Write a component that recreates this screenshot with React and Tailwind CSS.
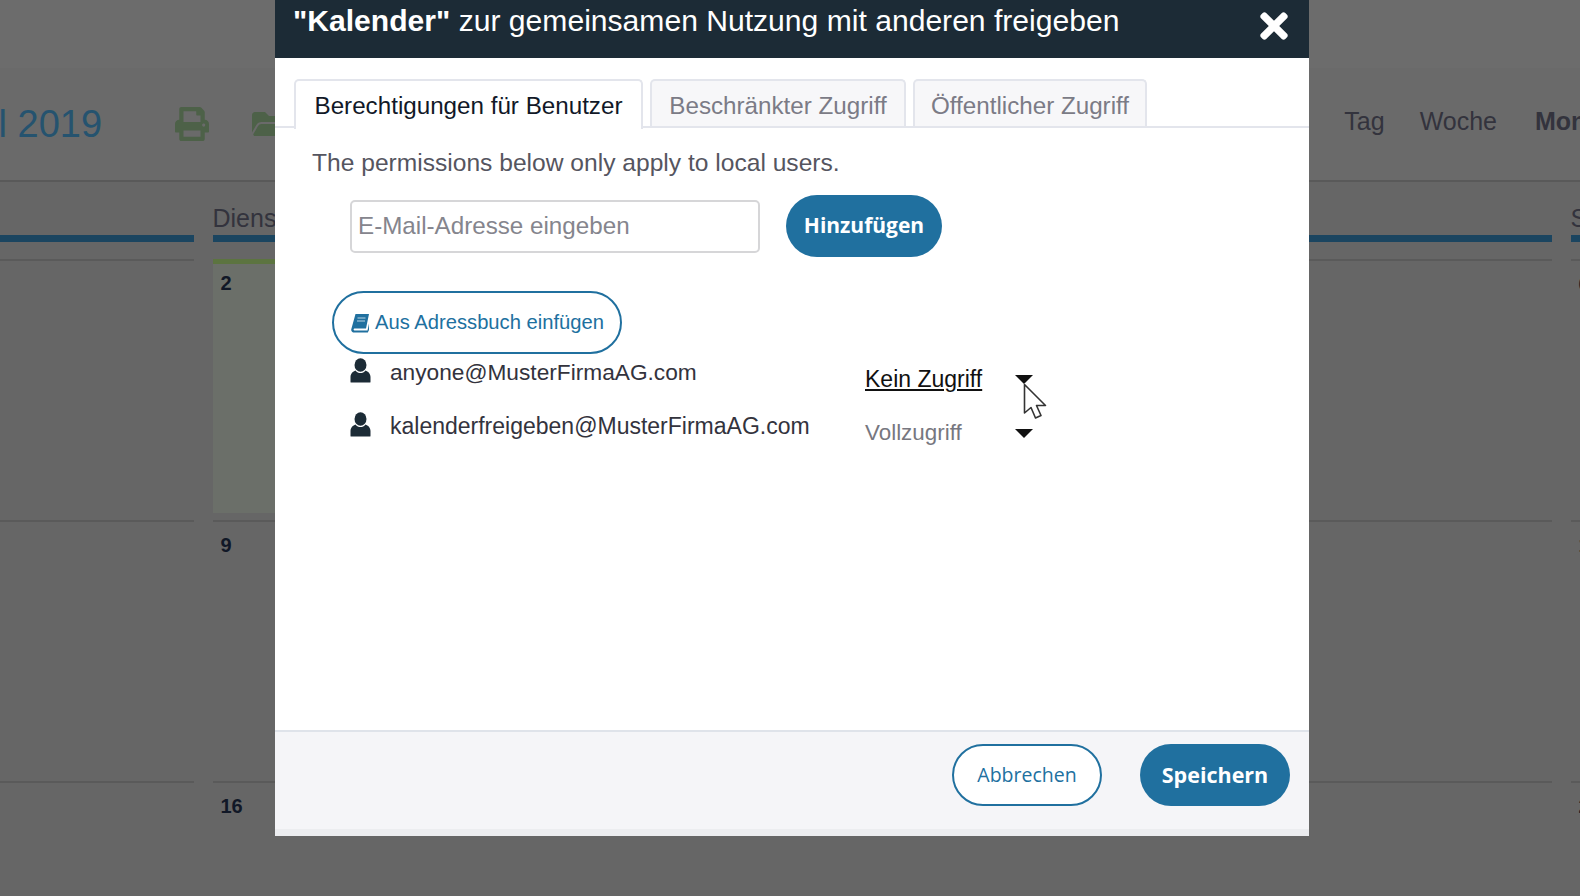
import React from 'react';
import { FaFolderOpen, FaPrint, FaTimes } from 'react-icons/fa';

const days = ['Montag', 'Dienstag', 'Mittwoch', 'Donnerstag', 'Freitag', 'Samstag'];
const weeks = [
    ['', '2', '3', '4', '5', '6'],
    ['', '9', '10', '11', '12', '13'],
    ['', '16', '17', '18', '19', '20'],
];
const shares = [
    { email: 'anyone@MusterFirmaAG.com', access: 'Kein Zugriff', active: true },
    { email: 'kalenderfreigeben@MusterFirmaAG.com', access: 'Vollzugriff', active: false },
];

const Calendar = () => (
    <div className="h-full overflow-hidden bg-[#666666] font-['Liberation_Sans',sans-serif]">
        <div className="h-[68px] bg-[#6c6c6c]" />
        <div className="flex h-[114px] items-center justify-between border-b-2 border-[#595959] bg-[#6a6a6a]">
            <div className="-ml-[69px] flex items-center">
                <span className="w-[244px] whitespace-nowrap text-[38px] leading-none text-[#25536f]">April 2019</span>
                <FaPrint className="h-[34px] w-[34px] text-[#4d6148]" />
                <FaFolderOpen className="ml-[43px] h-[36px] w-[36px] text-[#4d6148]" />
            </div>
            <div className="-mt-[4px] flex items-center text-[25px] text-[#33333d]">
                <span>Tag</span>
                <span className="ml-[35px]">Woche</span>
                <span className="ml-[38px] w-[45px] overflow-hidden font-bold">Monat</span>
            </div>
        </div>
        <div className="-ml-[127px] grid w-[2040px] grid-cols-[repeat(6,320.5px)] gap-x-[19px]">
            {days.map(day => (
                <div key={day} className="flex h-[79px] flex-col justify-start border-b-2 border-[#5a5a5a]">
                    <div className="h-[53px] overflow-hidden pt-[21px] text-[25px] leading-[30px] text-[#33333d]">{day}</div>
                    <div className="h-[7px] bg-[#1b4560]" />
                </div>
            ))}
            {weeks.map((week, index) => week.map((date, column) => (
                <div key={`${index}-${column}`} className="flex h-[261px] border-b-2 border-[#5a5a5a]">
                    <div className={`w-full pl-[8px] text-[20px] font-bold leading-[24px] text-[#111827] ${index === 0 && column === 1 ? '-mt-[2px] mb-[7px] border-t-[5px] border-[#5c7440] bg-[#6b6f69] pt-[7px]' : 'pt-[11px]'}`}>
                        {date}
                    </div>
                </div>
            )))}
        </div>
    </div>
);

const Cursor = () => (
    <svg viewBox="0 0 24 38" className="absolute left-[1023px] top-[383px] h-[38px] w-[24px]">
        <path d="M1.5 1.5V30L8 24.5L12.5 35L18 32.5L13.5 22.5H22.5Z" fill="#fff" stroke="#333" strokeWidth="1.6" strokeLinejoin="round" />
    </svg>
);

const BookIcon = () => (
    <svg viewBox="0 0 20 20" className="h-[20px] w-[20px]">
        <path d="M5.5 1H19L16 15.5H5C4 15.5 3.6 16 3.6 16.6C3.6 17.3 4.2 17.6 5 17.6H17.5L19 10.5V17L17.8 19.5H4.5C2.5 19.5 1 18.5 1.2 16.4Z" fill="#20709f" />
        <path d="M7.5 5H15.5M7 8H15" stroke="#bcd6e6" strokeWidth="1" />
    </svg>
);

const UserIcon = () => (
    <svg viewBox="0 0 21 25" className="h-[25px] w-[21px]">
        <ellipse cx="10.5" cy="7" rx="6" ry="6.8" fill="#1c2b36" />
        <path d="M1 24.5C0.5 24.5 0.5 24 0.5 23.5V19C0.5 15.5 3 13.5 5.5 12.5C7 14.5 8.5 15 10.5 15C12.5 15 14 14.5 15.5 12.5C18 13.5 20.5 15.5 20.5 19V23.5C20.5 24 20.5 24.5 20 24.5Z" fill="#1c2b36" />
    </svg>
);

const ShareDialog = () => (
    <div className="absolute left-[275px] top-0 flex h-[836px] w-[1034px] flex-col bg-white font-['Liberation_Sans',sans-serif]">
        <div className="flex h-[58px] items-start justify-between bg-[#1c2b36] pl-[18px] pr-[15px] text-white">
            <h2 className="pt-[3px] text-[30.1px] leading-[36px]">
                <b>"Kalender"</b> zur gemeinsamen Nutzung mit anderen freigeben
            </h2>
            <FaTimes className="mt-[6px] h-[40px] w-[40px]" />
        </div>

        <div className="flex-1 pt-[21px]">
            <div className="flex h-[49px] gap-[7px] border-b-2 border-[#e3e5ec] pl-[19px] text-[24.2px] leading-[50px]">
                <div className="-mb-[2px] h-[50px] w-[349px] rounded-t-[5px] border-2 border-b-0 border-[#e3e5ec] bg-white text-center text-[#111827]">Berechtigungen für Benutzer</div>
                <div className="h-[47px] w-[256px] rounded-t-[5px] border-2 border-b-0 border-[#e3e5ec] bg-[#f7f7f9] text-center text-[#7b7b86]">Beschränkter Zugriff</div>
                <div className="h-[47px] w-[234px] rounded-t-[5px] border-2 border-b-0 border-[#e3e5ec] bg-[#f7f7f9] text-center text-[#7b7b86]">Öffentlicher Zugriff</div>
            </div>

            <p className="pl-[37px] pt-[20px] text-[24.6px] leading-[30px] text-[#55555f]">The permissions below only apply to local users.</p>

            <div className="flex items-center pl-[75px] pt-[17px]">
                <div className="flex h-[53px] w-[410px] items-center rounded-[5px] border-2 border-[#d6d6d8] pl-[6px] text-[24.2px] text-[#85858d]">E-Mail-Adresse eingeben</div>
                <button className="ml-[26px] h-[62px] w-[156px] rounded-full bg-[#20709f] text-center font-['Open_Sans',sans-serif] text-[21px] font-bold text-white">Hinzufügen</button>
            </div>

            <button className="ml-[57px] mt-[34px] flex h-[63px] w-[290px] items-center justify-center gap-[5px] rounded-full border-2 border-[#20709f] text-[20.2px] text-[#20709f]">
                <BookIcon />
                Aus Adressbuch einfügen
            </button>

            <div className="flex flex-col gap-[20px] pl-[75px] pt-[4px]">
                {shares.map(share => (
                    <div key={share.email} className="flex h-[34px] items-start">
                        <UserIcon />
                        <span className={`ml-[19px] w-[475px] leading-[28px] text-[#33333d] ${share.active ? 'text-[22.7px]' : 'text-[23px]'}`}>{share.email}</span>
                        <span className={`mt-[7px] w-[150px] leading-[28px] ${share.active ? 'text-[23px] text-[#111] underline' : 'text-[22.4px] text-[#77777f]'}`}>{share.access}</span>
                        <span className="mt-[17px] border-x-[9px] border-t-[9px] border-x-transparent border-t-[#111]" />
                    </div>
                ))}
            </div>
        </div>

        <div className="flex h-[99px] justify-end gap-[38px] border-t-2 border-[#dfe3ea] bg-[#f5f5f8] pr-[19px] pt-[12px]">
            <button className="h-[62px] w-[150px] rounded-full border-2 border-[#20709f] bg-white font-['Open_Sans',sans-serif] text-[19.5px] text-[#20709f]">Abbrechen</button>
            <button className="h-[62px] w-[150px] rounded-full bg-[#20709f] font-['Open_Sans',sans-serif] text-[21.5px] font-bold text-white">Speichern</button>
        </div>
        <div className="h-[7px] bg-[#ecedf0]" />
    </div>
);

const App = () => (
    <div className="relative h-[896px] w-[1580px] overflow-hidden">
        <Calendar />
        <ShareDialog />
        <Cursor />
    </div>
);

export default App;
